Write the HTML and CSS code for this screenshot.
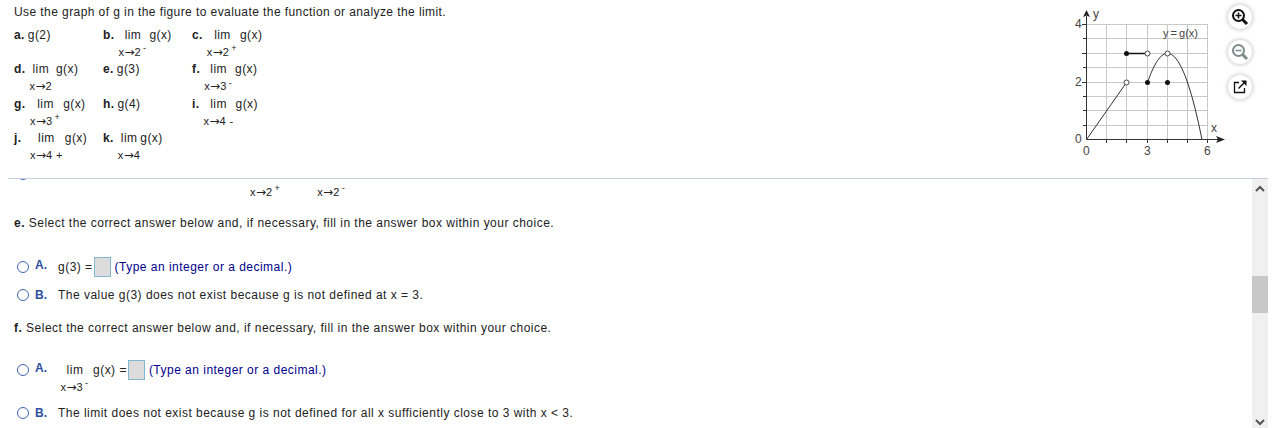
FILE: index.html
```html
<!DOCTYPE html>
<html lang="en">
<head>
    <meta charset="UTF-8">
    <meta name="viewport" content="width=device-width, initial-scale=1.0">
    <title>Evaluate the function from the graph</title>
    <link rel="stylesheet" href="styles.css">
</head>
<body>

    <div class="page">
        <div class="top">
            <div class="question">
                <p class="prompt">Use the graph of g in the figure to evaluate the function or analyze the limit.</p>
                <div class="parts">
                    <div class="part"><b>a.</b><span class="plain">g(2)</span></div>
                    <div class="part"><b class="tag">b.</b><span class="lim"><span>lim</span><small>x<i>→</i>2<sup>-</sup></small></span><span class="fn">g(x)</span></div>
                    <div class="part"><b class="tag">c.</b><span class="lim"><span>lim</span><small>x<i>→</i>2<sup>+</sup></small></span><span class="fn">g(x)</span></div>

                    <div class="part"><b class="tag">d.</b><span class="lim"><span>lim</span><small>x<i>→</i>2</small></span><span class="fn gap">g(x)</span></div>
                    <div class="part"><b>e.</b><span class="plain">g(3)</span></div>
                    <div class="part"><b class="tag">f.</b><span class="lim"><span>lim</span><small>x<i>→</i>3<sup>-</sup></small></span><span class="fn">g(x)</span></div>

                    <div class="part"><b class="tag wide">g.</b><span class="lim"><span>lim</span><small>x<i>→</i>3<sup>+</sup></small></span><span class="fn">g(x)</span></div>
                    <div class="part"><b>h.</b><span class="plain">g(4)</span></div>
                    <div class="part"><b class="tag">i.</b><span class="lim"><span>lim</span><small>x<i>→</i>4 -</small></span><span class="fn">g(x)</span></div>

                    <div class="part"><b class="tag wide">j.</b><span class="lim"><span>lim</span><small>x<i>→</i>4 +</small></span><span class="fn">g(x)</span></div>
                    <div class="part"><b class="tag">k.</b><span class="lim"><span>lim</span><small>x<i>→</i>4</small></span><span class="fn tight">g(x)</span></div>
                </div>
            </div>

            <svg class="graph" width="160" height="160" viewBox="0 0 160 160">
                <path class="grid" d="M36.5 16V131M56.5 16V131M77.5 16V131M97.5 16V131M117.5 16V131M137.5 16V131M16 16.5H137.5M16 30.5H137.5M16 45.5H137.5M16 59.5H137.5M16 74.5H137.5M16 88.5H137.5M16 102.5H137.5M16 117.5H137.5"/>
                <path class="axis" d="M16.5 8V131.5H148"/>
                <path class="axis" d="M12 16.5H16M13 30.5H16M12 45.5H16M13 59.5H16M12 74.5H16M13 88.5H16M13 102.5H16M13 117.5H16M36.5 131V135M56.5 131V135M77.5 131V135M97.5 131V135M117.5 131V135M137.5 131V135"/>
                <path class="head" d="M16.5 2L20 9L16.5 7.500L13 9Z"/>
                <path class="head" d="M155 131.500L146 135L148 131.500L146 128Z"/>
                <path class="curve" d="M16.500 131.500L56.500 74.500"/>
                <path class="curve" d="M77.500 74.500Q104.600 -5 132 131.500"/>
                <path class="segment" d="M56.500 45.500H77.500"/>
                <circle class="dot" cx="56.500" cy="45.500" r="2.500"/>
                <circle class="dot" cx="77.500" cy="74.500" r="2.500"/>
                <circle class="dot" cx="97.500" cy="74.500" r="2.500"/>
                <circle class="hole" cx="56.500" cy="74.500" r="2.500"/>
                <circle class="hole" cx="77.500" cy="45.500" r="2.500"/>
                <circle class="hole" cx="97.500" cy="45.500" r="2.500"/>
                <text x="5" y="20">4</text>
                <text x="5" y="78">2</text>
                <text x="5" y="135">0</text>
                <text x="13" y="147">0</text>
                <text x="74" y="147">3</text>
                <text x="134" y="147">6</text>
                <text x="23" y="10">y</text>
                <text x="141" y="124">x</text>
                <text class="fn-label" x="93" y="29">y = g(x)</text>
            </svg>

            <div class="tools">
                <button class="tool">
                    <svg width="18" height="18" viewBox="0 0 18 18"><circle cx="7.500" cy="7.500" r="5.500" fill="none" stroke="#111" stroke-width="2"/><path d="M11.500 11.500L16 16" stroke="#111" stroke-width="3"/><path d="M7.500 4.500V10.500M4.500 7.500H10.500" stroke="#111" stroke-width="1.500"/></svg>
                </button>
                <button class="tool">
                    <svg width="18" height="18" viewBox="0 0 18 18"><circle cx="7.500" cy="7.500" r="5.500" fill="none" stroke="#7f8a8a" stroke-width="2"/><path d="M11.500 11.500L16 16" stroke="#7f8a8a" stroke-width="3"/><path d="M4.500 7.500H10.500" stroke="#7f8a8a" stroke-width="1.500"/></svg>
                </button>
                <button class="tool">
                    <svg width="18" height="18" viewBox="0 0 18 18"><path d="M8 4.500H3.500V14.500H13.500V10" fill="none" stroke="#111" stroke-width="1.300"/><path d="M7.500 10.500L13 5" stroke="#111" stroke-width="1.500"/><path d="M10 2.500H15.500V8Z" fill="#111"/></svg>
                </button>
            </div>
        </div>

        <div class="pane">
            <div class="answers">
                <div class="carry">
                    <span class="radio"></span>
                    <small class="carry-sub first">x<i>→</i>2<sup>+</sup></small>
                    <small class="carry-sub">x<i>→</i>2<sup>-</sup></small>
                </div>

                <p class="step"><b>e.</b> Select the correct answer below and, if necessary, fill in the answer box within your choice.</p>
                <div class="choice choice-ea">
                    <span class="radio"></span><span class="letter">A.</span>
                    <span class="body">g(3) =</span><span class="box"></span><span class="hint">(Type an integer or a decimal.)</span>
                </div>
                <div class="choice choice-eb">
                    <span class="radio"></span><span class="letter">B.</span>
                    <span class="body">The value g(3) does not exist because g is not defined at x = 3.</span>
                </div>

                <p class="step step-f"><b>f.</b> Select the correct answer below and, if necessary, fill in the answer box within your choice.</p>
                <div class="choice choice-fa">
                    <span class="radio"></span><span class="letter">A.</span>
                    <span class="lim answer-lim"><span>lim</span><small>x<i>→</i>3<sup>-</sup></small></span>
                    <span class="body">g(x) =</span><span class="box"></span><span class="hint">(Type an integer or a decimal.)</span>
                </div>
                <div class="choice choice-fb">
                    <span class="radio"></span><span class="letter">B.</span>
                    <span class="body">The limit does not exist because g is not defined for all x sufficiently close to 3 with x &lt; 3.</span>
                </div>
            </div>

            <div class="scrollbar">
                <svg width="16" height="10" viewBox="0 0 16 10"><path d="M4 8L8 4L12 8" fill="none" stroke="#555" stroke-width="2"/></svg>
                <div class="thumb"></div>
                <svg class="down" width="16" height="10" viewBox="0 0 16 10"><path d="M4 2L8 6L12 2" fill="none" stroke="#555" stroke-width="2"/></svg>
            </div>
        </div>
    </div>

</body>
</html>
```

FILE: styles.css
```css
body {
    font-family: "Liberation Sans", Arial, sans-serif;
    font-size: 12px;
    letter-spacing: 0.42px;
    color: #222;
    background-color: #fff;
    margin: 0;
    overflow: hidden;
}
p {
    margin: 0;
}
small {
    font-size: 11px;
    line-height: 15px;
    letter-spacing: 0.4px;
    white-space: nowrap;
}
small i {
    font-family: "DejaVu Sans", sans-serif;
    font-size: 12px;
    font-style: normal;
    letter-spacing: 0;
}
sup {
    font-size: 9px;
    line-height: 0;
    margin: 0 1px 0 2px;
}
.page {
    height: 428px;
    display: flex;
    flex-direction: column;
}
.top {
    height: 178px;
    display: flex;
    flex-shrink: 0;
}
.question {
    width: 1070px;
    padding: 5px 0 0 14px;
    box-sizing: border-box;
}
.prompt {
    line-height: 15px;
}
.parts {
    display: grid;
    grid-template-columns: 89px 89px 89px;
    grid-auto-rows: 34.4px;
    margin-top: 8px;
}
.part {
    display: flex;
    align-items: flex-start;
    line-height: 15px;
}
.plain {
    margin-left: 3px;
}
.tag {
    margin-right: 4px;
}
.tag.wide {
    min-width: 16px;
    margin-right: 0;
}
.lim {
    display: inline-flex;
    flex-direction: column;
    align-items: center;
    flex-shrink: 0;
}
.lim small {
    display: block;
    margin-top: 2px;
}
.fn {
    margin-left: 2px;
}
.fn.gap {
    margin-left: 4px;
}
.fn.tight {
    margin-left: 0;
}
.graph {
    flex-shrink: 0;
    margin-top: 8px;
}
.graph text {
    font-size: 12px;
    letter-spacing: 0;
    fill: #444;
}
.graph .fn-label {
    font-size: 11px;
    word-spacing: -1px;
}
.grid {
    fill: none;
    stroke: #c8c8c8;
}
.axis {
    fill: none;
    stroke: #333;
}
.head {
    fill: #222;
}
.curve {
    fill: none;
    stroke: #333;
}
.segment {
    fill: none;
    stroke: #111;
    stroke-width: 1.5;
}
.dot {
    fill: #111;
}
.hole {
    fill: #fff;
    stroke: #444;
}
.tools {
    display: flex;
    flex-direction: column;
    gap: 11px;
    margin: 5px 0 0 -2px;
}
.tool {
    width: 24px;
    height: 24px;
    padding: 0;
    border: none;
    border-radius: 50%;
    background: #fff;
    box-shadow: 0 0 5px rgba(0, 0, 0, 0.3);
    display: flex;
    align-items: center;
    justify-content: center;
}
.pane {
    height: 250px;
    margin: 0 6px 0 8px;
    border-top: 1px solid #c5cfe0;
    display: flex;
    overflow: hidden;
}
.answers {
    flex: 1;
    padding-left: 6px;
    letter-spacing: 0.48px;
}
.carry {
    display: flex;
    align-items: flex-start;
    height: 19px;
    padding-top: 6px;
}
.carry .radio {
    margin: -17px 0 0 3px;
}
.carry-sub {
    margin-left: 36px;
}
.carry-sub.first {
    margin-left: 221px;
}
.step {
    line-height: 15px;
    margin-top: 12px;
}
.step-f {
    margin-top: 18px;
}
.choice {
    display: flex;
    align-items: flex-start;
    line-height: 15px;
}
.choice-ea {
    margin-top: 29px;
    height: 28px;
}
.choice-eb {
    height: 15px;
}
.choice-fa {
    margin-top: 27px;
    height: 43px;
}
.radio {
    width: 10px;
    height: 10px;
    border: 1.5px solid #3f65b5;
    border-radius: 50%;
    background: #fff;
    flex-shrink: 0;
    margin: 1px 6px 0 3px;
}
.letter {
    width: 23px;
    color: #2d4fa0;
    font-weight: 700;
    letter-spacing: 0;
    flex-shrink: 0;
}
.choice-ea .letter,
.choice-fa .letter {
    margin-top: -2px;
}
.body {
    white-space: nowrap;
}
.box {
    width: 15px;
    height: 18px;
    margin: -3px 4px 0 1px;
    background: #dcdcdc;
    border: 1px solid #7fb8cf;
    flex-shrink: 0;
}
.hint {
    color: #00008b;
    white-space: nowrap;
}
.answer-lim {
    width: 34px;
    margin-right: 1px;
}
.scrollbar {
    width: 16px;
    background: #f0f0f0;
    flex-shrink: 0;
    display: flex;
    flex-direction: column;
}
.scrollbar svg {
    flex-shrink: 0;
    margin-top: 4px;
}
.thumb {
    height: 37px;
    margin-top: 83px;
    background: #c8c8c8;
}
.scrollbar .down {
    margin-top: auto;
}
```
